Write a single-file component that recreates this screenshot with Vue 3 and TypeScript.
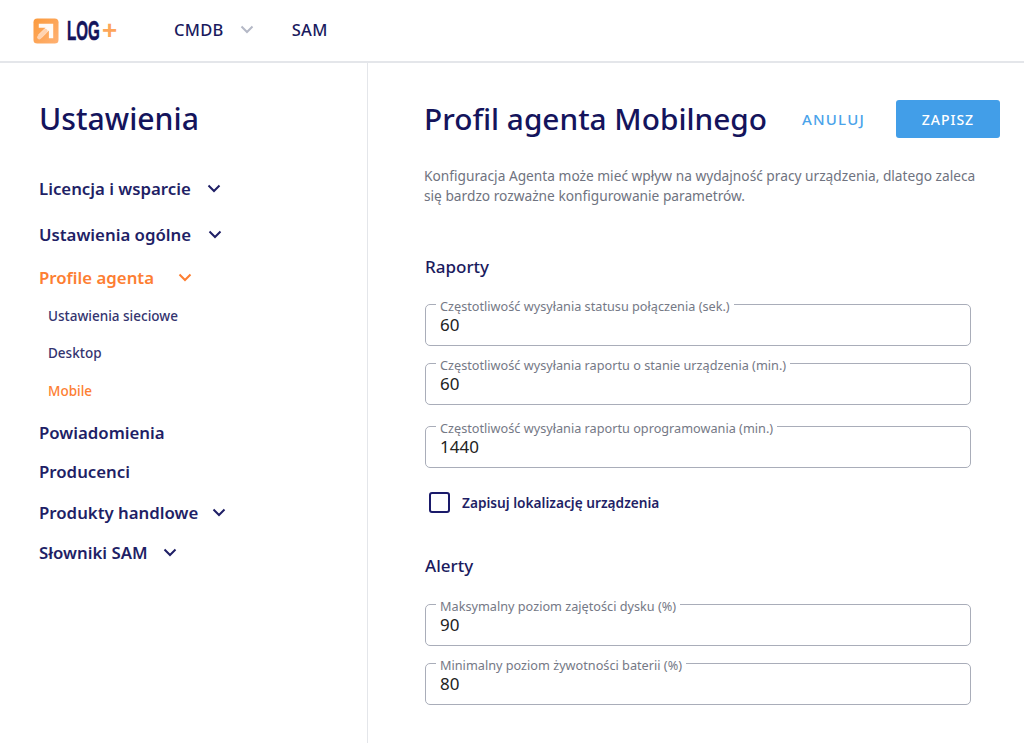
<script setup lang="ts">
interface NavItem { label: string; gap: number; chevGap?: number; active?: boolean; sub?: boolean }
const nav: NavItem[] = [
  { label: 'Licencja i wsparcie', gap: 0, chevGap: 16 },
  { label: 'Ustawienia ogólne', gap: 22, chevGap: 17 },
  { label: 'Profile agenta', gap: 19, chevGap: 24, active: true },
  { label: 'Ustawienia sieciowe', gap: 15, sub: true },
  { label: 'Desktop', gap: 13, sub: true },
  { label: 'Mobile', gap: 14, sub: true, active: true },
  { label: 'Powiadomienia', gap: 17 },
  { label: 'Producenci', gap: 15 },
  { label: 'Produkty handlowe', gap: 17, chevGap: 14 },
  { label: 'Słowniki SAM', gap: 16, chevGap: 15 },
]
const reports = [
  { label: 'Częstotliwość wysyłania statusu połączenia (sek.)', value: '60', gap: 0 },
  { label: 'Częstotliwość wysyłania raportu o stanie urządzenia (min.)', value: '60', gap: 10 },
  { label: 'Częstotliwość wysyłania raportu oprogramowania (min.)', value: '1440', gap: 14 },
]
const alerts = [
  { label: 'Maksymalny poziom zajętości dysku (%)', value: '90', gap: 0 },
  { label: 'Minimalny poziom żywotności baterii (%)', value: '80', gap: 10 },
]
</script>

<template>
  <div class="page">
    <header class="top">
      <div class="logo">
        <svg width="26" height="26" viewBox="0 0 27 27" aria-hidden="true">
          <defs>
            <linearGradient id="lg" x1="0" y1="0" x2="1" y2="1">
              <stop offset="0" stop-color="#fb9a3c" />
              <stop offset="1" stop-color="#ffb173" />
            </linearGradient>
          </defs>
          <rect width="26" height="26" x="0.5" y="0.5" rx="4" fill="url(#lg)" />
          <path d="M6 6h15v15h-4.500v-8L9 20.500 5.500 17.500 13 10H6z" fill="#fff" opacity="0.95" />
          <path d="M6.500 20 13 13.500" stroke="#ffd3b0" stroke-width="4.500" stroke-linecap="round" />
        </svg>
        <span class="logo-text">LOG</span>
        <span class="logo-plus">+</span>
      </div>
      <nav class="menu">
        <span class="menu-item">CMDB</span>
        <svg class="menu-chev" width="14" height="9" viewBox="0 0 14 9" aria-hidden="true">
          <path d="M1.500 1.500 7 7l5.500-5.500" fill="none" stroke="#b4b8c6" stroke-width="2" />
        </svg>
        <span class="menu-item sam">SAM</span>
      </nav>
    </header>
    <div class="body">
      <aside class="side">
        <h2 class="side-title">Ustawienia</h2>
        <ul class="nav">
          <li
            v-for="item in nav"
            :key="item.label"
            class="nav-row"
            :class="{ sub: item.sub, active: item.active }"
            :style="{ marginTop: item.gap + 'px' }"
          >
            <span>{{ item.label }}</span>
            <svg
              v-if="item.chevGap"
              class="chev"
              :style="{ marginLeft: item.chevGap + 'px' }"
              width="14"
              height="9"
              viewBox="0 0 14 9"
              aria-hidden="true"
            >
              <path d="M1.500 1.500 7 7l5.500-5.500" fill="none" stroke="currentColor" stroke-width="2" />
            </svg>
          </li>
        </ul>
      </aside>
      <main class="main">
        <div class="head">
          <h1 class="title">Profil agenta Mobilnego</h1>
          <button class="cancel" type="button">ANULUJ</button>
          <button class="save" type="button">ZAPISZ</button>
        </div>
        <p class="intro">
          Konfiguracja Agenta może mieć wpływ na wydajność pracy urządzenia, dlatego zaleca
          się bardzo rozważne konfigurowanie parametrów.
        </p>
        <h3 class="section first">Raporty</h3>
        <fieldset
          v-for="f in reports"
          :key="f.label"
          class="field"
          :style="{ marginTop: f.gap + 'px' }"
        >
          <legend>{{ f.label }}</legend>
          <div class="value">{{ f.value }}</div>
        </fieldset>
        <label class="check">
          <span class="box"></span>
          <span>Zapisuj lokalizację urządzenia</span>
        </label>
        <h3 class="section second">Alerty</h3>
        <fieldset
          v-for="f in alerts"
          :key="f.label"
          class="field"
          :style="{ marginTop: f.gap + 'px' }"
        >
          <legend>{{ f.label }}</legend>
          <div class="value">{{ f.value }}</div>
        </fieldset>
      </main>
    </div>
  </div>
</template>

<style>
html, body { margin: 0; background: #fff; overflow: hidden; }
</style>

<style scoped>
.page {
  width: 1024px;
  height: 743px;
  overflow: hidden;
  display: flex;
  flex-direction: column;
  font-family: "Noto Sans", "Open Sans", sans-serif;
  color: #1a1a5e;
}
.top {
  height: 61px;
  flex: none;
  display: flex;
  align-items: center;
  border-bottom: 2px solid #e4e6ea;
}
.logo {
  margin-left: 33px;
  display: flex;
  align-items: center;
  width: 141px;
}
.logo svg { display: block; flex: none; }
.logo-text {
  margin-left: 8px;
  font-family: "Liberation Sans", sans-serif;
  font-size: 28px;
  font-weight: 700;
  color: #14145c;
  -webkit-text-stroke: 0.6px #14145c;
  display: inline-block;
  width: 32px;
  transform: scaleX(0.54);
  transform-origin: left center;
}
.logo-plus {
  margin-left: 3px;
  font-family: "Liberation Sans", sans-serif;
  font-size: 26px;
  line-height: 25px;
  font-weight: 700;
  color: #fda65a;
}
.menu { display: flex; align-items: center; margin-top: -2px; }
.menu-item {
  font-size: 16.5px;
  font-weight: 500;
  letter-spacing: 0.3px;
  color: #1a1a5e;
}
.menu-chev { margin-left: 16px; }
.sam { margin-left: 38px; }
.body { flex: 1; display: flex; min-height: 0; }
.side {
  width: 368px;
  flex: none;
  box-sizing: border-box;
  border-right: 1px solid #e4e6ea;
  padding: 36px 0 0 39px;
}
.side-title {
  margin: 0;
  font-size: 30.2px;
  line-height: 40px;
  font-weight: 500;
  color: #14145c;
}
.nav { list-style: none; margin: 37px 0 0; padding: 0; }
.nav-row {
  display: flex;
  align-items: center;
  height: 24px;
  font-size: 16.8px;
  font-weight: 600;
  color: #1f1f66;
}
.nav-row.active { color: #fd7e32; }
.nav-row.sub {
  height: 24px;
  padding-left: 9px;
  font-size: 13.5px;
  font-weight: 500;
  color: #34346f;
}
.nav-row.sub.active { color: #fd7e32; }
.chev { flex: none; }
.main {
  flex: 1;
  box-sizing: border-box;
  padding: 36px 0 0 56px;
  min-width: 0;
}
.head { display: flex; align-items: center; height: 40px; }
.title {
  margin: 0;
  font-size: 29.8px;
  line-height: 40px;
  font-weight: 500;
  color: #14145c;
  white-space: nowrap;
}
.cancel, .save {
  font-family: inherit;
  font-size: 14px;
  font-weight: 500;
  letter-spacing: 1px;
  border: 0;
  padding: 0;
}
.cancel {
  margin-left: 35px;
  width: 62px;
  font-size: 15px;
  letter-spacing: 1.2px;
  background: none;
  color: #4aa3ea;
}
.save {
  margin-left: 32px;
  width: 104px;
  height: 38px;
  border-radius: 3px;
  background: #429ee8;
  color: #fff;
}
.intro {
  margin: 27px 0 0;
  width: 565px;
  font-size: 13.72px;
  line-height: 20px;
  color: #6f7380;
}
.section {
  margin: 0 0 0 1px;
  font-size: 17px;
  line-height: 22px;
  font-weight: 500;
  color: #1a1a5e;
}
.section.first { margin-top: 50px; margin-bottom: 19px; }
.section.second { margin-top: 43px; margin-bottom: 20px; }
.field {
  box-sizing: border-box;
  width: 546px;
  height: 49px;
  margin: 0 0 0 1px;
  padding: 0 14px;
  border: 1px solid #a9adb9;
  border-radius: 5px;
  min-width: 0;
}
.field legend {
  position: relative;
  top: 2px;
  padding: 0 4px;
  margin-left: -4px;
  font-size: 12.7px;
  line-height: 14px;
  color: #757986;
}
.value {
  font-size: 17px;
  line-height: 22px;
  margin-top: 3px;
  color: #222;
}
.check {
  display: flex;
  align-items: center;
  margin: 24px 0 0 5px;
  font-size: 13.7px;
  font-weight: 600;
  color: #1f1f66;
}
.box {
  width: 21px;
  height: 21px;
  box-sizing: border-box;
  border: 2px solid #1a1a6a;
  border-radius: 3px;
  margin-right: 12px;
}
.section.second { margin-top: 42px; }
</style>
